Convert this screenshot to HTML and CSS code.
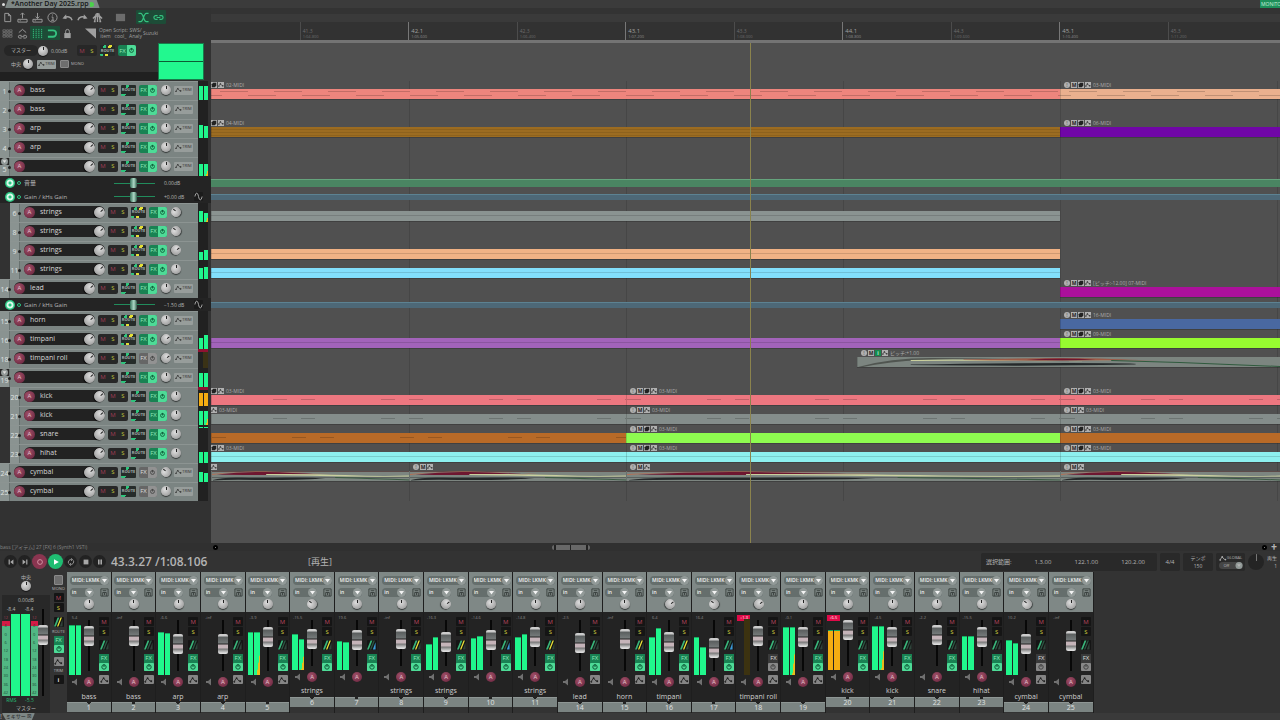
FILE: index.html
```html
<!DOCTYPE html>
<html lang="ja">
<head>
    <meta charset="UTF-8">
    <meta name="viewport" content="width=device-width, initial-scale=1.0">
    <title>Another Day 2025.rpp</title>
    <link rel="stylesheet" href="styles.css">
</head>

<body>

    <!-- icons -->
    <svg class="sprite" width="0" height="0">
        <symbol id="i-file" viewBox="0 0 12 12"><path d="M3 1.5h4l2.500 2.500v6.500H3zM7 1.500V4h2.500"/></symbol>
        <symbol id="i-open" viewBox="0 0 12 12"><path d="M1 8h10v3H1zM6 7V1M4 3l2-2 2 2M3 9.500h1"/></symbol>
        <symbol id="i-save" viewBox="0 0 12 12"><path d="M1 8h10v3H1zM6 1v6M4 5l2 2 2-2M3 9.500h1"/></symbol>
        <symbol id="i-info" viewBox="0 0 12 12"><circle cx="6" cy="6" r="5"/><path d="M5 5.500h1.500V9M4.500 9h3.500M6 2.800v1"/></symbol>
        <symbol id="i-undo" viewBox="0 0 12 12"><path stroke-width="1.500" d="M11 9C10 5 6 4.500 2.500 6"/><path class="fill" d="M0.500 7l4-4.500 0.500 5z"/></symbol>
        <symbol id="i-redo" viewBox="0 0 12 12"><path stroke-width="1.500" d="M1 9C2 5 6 4.500 9.500 6"/><path class="fill" d="M11.500 7l-4-4.500-0.500 5z"/></symbol>
        <symbol id="i-metro" viewBox="0 0 12 12"><path stroke-width="1.500" d="M4.500 2h3L9 10M4.500 2L3 10M1 7l2.500-2.500h5L11 7M6 1v10M2 10.500h2M8 10.500h2"/></symbol>
        <symbol id="i-box" viewBox="0 0 12 12"><path class="fill" d="M1 2h10v8H1z"/></symbol>
        <symbol id="i-cross" viewBox="0 0 12 12"><path stroke-width="1.300" d="M0.500 1.500h2.500c3 0 3 9 6 9h2.500M0.500 10.500h2.500c3 0 3-9 6-9h2.500"/></symbol>
        <symbol id="i-link" viewBox="0 0 12 12"><path stroke-width="1.300" d="M5 4H3a2 2 0 0 0 0 4h2M7 4h2a2 2 0 0 1 0 4H7M4 6h4"/></symbol>
        <symbol id="i-grid" viewBox="0 0 12 12"><path d="M1 2h3v2H1zM5 2h2v2H5zM8 2h3v2H8zM1 5h3v2H1zM5 5h2v2H5zM8 5h3v2H8zM1 8h3v2H1zM5 8h2v2H5zM8 8h3v2H8z"/></symbol>
        <symbol id="i-group" viewBox="0 0 12 12"><path d="M2 5l4-3.500L10 5M5 8H3a1.500 1.500 0 0 0 0 3h2M7 8h2a1.500 1.500 0 0 1 0 3H7M4 9.500h4"/></symbol>
        <symbol id="i-lines" viewBox="0 0 12 12"><path stroke-dasharray="1.500 0.700" d="M1.500 1v10M4.500 1v10M7.500 1v10M10.500 1v10"/></symbol>
        <symbol id="i-magnet" viewBox="0 0 12 12"><path stroke-width="2" d="M1 2.500h5.500a3.500 3.500 0 0 1 0 7H1"/></symbol>
        <symbol id="i-lock" viewBox="0 0 12 12"><path d="M4 6V3.500a2 2 0 0 1 4 0V6"/><path class="fill" d="M2.500 5.500h7v5.500h-7z"/></symbol>
        <symbol id="i-corner" viewBox="0 0 12 12"><path class="fill" d="M0 0.500h12v11z"/></symbol>
        <symbol id="i-env" viewBox="0 0 10 8"><path d="M1 6l3-4 2.500 3H9"/><circle class="fill" cx="1.500" cy="6" r="1"/><circle class="fill" cx="4" cy="2" r="1"/><circle class="fill" cx="8" cy="5.500" r="1"/></symbol>
        <symbol id="i-route" viewBox="0 0 10 10"><path class="r1" d="M0 10L4 0h2L2 10z"/><path class="r2" d="M3.300 10l4-10h1.500l-4 10z"/><path class="r3" d="M6.500 10l3-8v8z"/></symbol>
        <symbol id="i-power" viewBox="0 0 8 8"><circle cx="4" cy="4" r="2.200"/><path d="M4 1v3"/></symbol>
        <symbol id="i-wave" viewBox="0 0 10 10"><path d="M1 5c1-5 3-5 4 0s3 5 4 0"/></symbol>
        <symbol id="i-speaker" viewBox="0 0 8 8"><path class="fill" d="M1 3h2l3-2.500v7L3 5H1z"/></symbol>
        <symbol id="i-disk" viewBox="0 0 10 10"><path d="M1 1h8v8H1zM3 9V5h4v4M3 3h4M5 5v3"/></symbol>
        <symbol id="i-prev" viewBox="0 0 10 10"><path class="fill" d="M2 2h1.500v6H2zM8 2v6L4 5z"/></symbol>
        <symbol id="i-next" viewBox="0 0 10 10"><path class="fill" d="M6.500 2H8v6H6.500zM2 2v6l4-3z"/></symbol>
        <symbol id="i-rec" viewBox="0 0 10 10"><circle cx="5" cy="5" r="3"/></symbol>
        <symbol id="i-play" viewBox="0 0 10 10"><path class="fill" d="M2.500 1.500v7l6-3.500z"/></symbol>
        <symbol id="i-loop" viewBox="0 0 10 10"><path d="M2 7A3.500 3.500 0 0 1 6 2M8 3a3.500 3.500 0 0 1-4 5M5 0.500L7 2 5 3.500M5 6.500L3 8l2 1.500"/></symbol>
        <symbol id="i-stop" viewBox="0 0 10 10"><path class="fill" d="M2 2h6v6H2z"/></symbol>
        <symbol id="i-pause" viewBox="0 0 10 10"><path class="fill" d="M2.500 2h2v6h-2zM5.500 2h2v6h-2z"/></symbol>
        <symbol id="i-cube" viewBox="0 0 8 8"><path class="fill" d="M1 3l2-2h4v4L5 7H1z"/></symbol>
        <symbol id="i-drop" viewBox="0 0 9 9"><circle class="drop" cx="4.500" cy="4.500" r="4.500"/><path class="fill" d="M2 3h5L4.500 6.500z"/></symbol>
    </svg>

    <header class="tabs">
        <span class="tabs__dot"></span>
        <button class="tabs__tab">*Another Day 2025.rpp<i></i></button>
        <span class="tabs__monitor">MONITO</span>
    </header>

    <main class="arrange">
        <section class="panel">
            <div class="toolbar">
                <div class="toolbar__row">
                    <button class="tool"><svg><use href="#i-file"/></svg></button>
                    <button class="tool"><svg><use href="#i-open"/></svg></button>
                    <button class="tool"><svg><use href="#i-save"/></svg></button>
                    <button class="tool"><svg><use href="#i-info"/></svg></button>
                    <button class="tool"><svg><use href="#i-undo"/></svg></button>
                    <button class="tool"><svg><use href="#i-redo"/></svg></button>
                    <button class="tool"><svg><use href="#i-metro"/></svg></button>
                    <button class="tool tool--apart tool--dim"><svg><use href="#i-box"/></svg></button>
                    <button class="tool tool--apart _on"><svg><use href="#i-cross"/></svg></button>
                    <button class="tool _on"><svg><use href="#i-link"/></svg></button>
                </div>
                <div class="toolbar__row">
                    <button class="tool tool--dim"><svg><use href="#i-grid"/></svg></button>
                    <button class="tool"><svg><use href="#i-group"/></svg></button>
                    <button class="tool _on"><svg><use href="#i-lines"/></svg></button>
                    <button class="tool _on"><svg><use href="#i-magnet"/></svg></button>
                    <button class="tool"><svg><use href="#i-lock"/></svg></button>
                    <button class="tool tool--apart"><svg><use href="#i-corner"/></svg></button>
                    <button class="tool tool--text">Open item</button>
                    <button class="tool tool--text">Script: cool_</button>
                    <button class="tool tool--text">SWS/ Analy</button>
                    <button class="tool tool--text">Suzuki</button>
                </div>
            </div>

            <div class="master">
                <div class="master__controls">
                    <div class="master__row">
                        <span class="master__name">マスター</span>
                        <span class="knob"></span>
                        <span class="master__db">0.00dB</span>
                        <span class="ms"><button class="ms__m">M</button><button class="ms__s">S</button></span>
                        <button class="route route--busy">ROUTE</button>
                        <span class="fx"><button>FX</button><button class="fx__on"><svg><use href="#i-power"/></svg></button></span>
                    </div>
                    <div class="master__row master__row--second">
                        <span class="master__pan">中央</span>
                        <span class="knob"></span>
                        <button class="trim"><svg><use href="#i-env"/></svg>TRIM</button>
                        <button class="mono"></button>
                        <span class="master__mono">MONO</span>
                    </div>
                    <div class="master__foot"></div>
                </div>
                <div class="master__scope"></div>
            </div>

            <div class="tracks" id="tracks"></div>
        </section>

        <section class="timeline">
            <div class="ruler" id="ruler"></div>
            <div class="timeline__master"></div>
            <div class="lanes" id="lanes"></div>
            <div class="playhead"></div>
        </section>
    </main>

    <div class="status">
        <span class="status__text">bass [アイテム] 27 [FX] 6 (Synth1 VSTi)</span>
        <div class="scroll">
            <span class="scroll__dot"></span>
            <span class="scroll__thumb"></span>
            <span class="scroll__dot scroll__dot--end"></span>
            <span class="scroll__plus">✚</span>
        </div>
    </div>

    <section class="transport">
        <div class="transport__buttons">
            <button class="round"><svg><use href="#i-prev"/></svg></button>
            <button class="round"><svg><use href="#i-next"/></svg></button>
            <button class="round round--rec"><svg><use href="#i-rec"/></svg></button>
            <button class="round round--play"><svg><use href="#i-play"/></svg></button>
            <button class="round"><svg><use href="#i-loop"/></svg></button>
            <button class="round round--apart"><svg><use href="#i-stop"/></svg></button>
            <button class="round"><svg><use href="#i-pause"/></svg></button>
        </div>
        <span class="transport__time">43.3.27 /1:08.106</span>
        <span class="transport__state">[再生]</span>
        <div class="transport__info">
            <div class="info info--range"><span>選択範囲:</span><span>1.3.00</span><span>122.1.00</span><span>120.2.00</span></div>
            <div class="info info--sig">4/4</div>
            <div class="info info--tempo"><span>テンポ</span><span>150</span></div>
            <div class="info info--global">
                <span><svg><use href="#i-env"/></svg>GLOBAL</span>
                <button>Off<svg><use href="#i-drop"/></svg></button>
            </div>
            <span class="rate"></span>
            <div class="rate-text"><span>再生</span><span>1</span></div>
        </div>
    </section>

    <section class="mixer">
        <div class="mmaster">
            <div class="mmaster__main">
                <span class="mmaster__pan">中央</span>
                <span class="knob"></span>
                <div class="mmaster__box">
                    <span class="mmaster__db">0.00dB</span>
                    <div class="mmaster__level">
                        <div class="mmaster__meter">
                            <div class="mmaster__peaks"><span>-8.4</span><span>-8.4</span></div>
                            <div class="mmaster__bars">
                                <div class="scale"><span>12</span><span>6</span><span>0</span><span>6</span><span>12</span><span>18</span><span>24</span><span>30</span><span>36</span><span>42</span></div>
                                <i></i><i></i>
                                <div class="scale"><span>12</span><span>6</span><span>0</span><span>6</span><span>12</span><span>18</span><span>24</span><span>30</span><span>36</span><span>42</span></div>
                            </div>
                            <div class="mmaster__rms"><span>RMS</span><span>-5.5</span></div>
                        </div>
                        <input class="fader fader--master" type="range" min="0" max="67" value="51" aria-label="master volume">
                    </div>
                    <span class="mmaster__name">マスター</span>
                </div>
            </div>
            <div class="mmaster__side">
                <button class="mono"></button>
                <small>MONO</small>
                <button class="sq sq--m">M</button>
                <button class="sq sq--s">S</button>
                <button class="sq sq--route _yellow"><svg><use href="#i-route"/></svg></button>
                <small>ROUTE</small>
                <span class="vfx"><button>FX</button><button class="vfx__on"><svg><use href="#i-power"/></svg></button></span>
                <button class="sq sq--env"><svg><use href="#i-env"/></svg></button>
                <small>TRIM</small>
                <button class="sq sq--i">i</button>
            </div>
        </div>
        <div class="strips" id="strips"></div>
    </section>

    <footer class="bottom">
        <span>!</span>
        <button class="bottom__tab">ミキサー ☒</button>
    </footer>

    <script src="script.js"></script>
</body>

</html>
```
FILE: styles.css
```css
* {
    box-sizing: border-box;
}

body {
    margin: 0;
    min-height: 100vh;
    background: #333;
    color: #b4b4b4;
    font: 7px/8px "Open Sans", "Noto Sans CJK JP", sans-serif;
    overflow-x: hidden;
}

button,
select {
    display: block;
    margin: 0;
    padding: 0;
    border: 0;
    border-radius: 1px;
    background: none;
    color: inherit;
    font: inherit;
    text-align: center;
    appearance: none;
}

svg {
    display: block;
    fill: none;
    stroke: currentColor;
}

svg .fill,
.fill {
    fill: currentColor;
    stroke: none;
}

.sprite {
    position: absolute;
}

/* ========== TABS =========== */
.tabs {
    display: flex;
    align-items: center;
    height: 8px;
    background: #3b3b3b;
}

.tabs__dot {
    width: 3px;
    height: 3px;
    margin-left: 2px;
    border-radius: 50%;
    background: #ddd;
}

.tabs__tab {
    display: flex;
    align-items: center;
    height: 8px;
    padding: 0 6px 0 6px;
    background: #7e8785;
    color: #151515;
    font-weight: 600;
    font-size: 7px;
    white-space: nowrap;
    clip-path: polygon(3px 0, calc(100% - 3px) 0, 100% 100%, 0 100%);
}

.tabs__tab i {
    width: 4px;
    height: 5px;
    margin-left: 1px;
    border-radius: 1px 3px 3px 1px;
    background: #4bd04c;
}

.tabs__monitor {
    width: 20px;
    margin-left: auto;
    padding-left: 1px;
    overflow: hidden;
    background: #1d8f5a;
    color: #c8f0dc;
    font-size: 5px;
}

/* ========== LEFT PANEL =========== */
.arrange {
    display: flex;
    height: 535px;
}

.panel {
    flex: 0 0 211px;
    background: #323232;
}

.toolbar {
    height: 34px;
    padding-top: 2px;
}

.toolbar__row {
    display: flex;
    height: 16px;
}

.tool {
    display: flex;
    align-items: center;
    justify-content: center;
    width: 15px;
    height: 14px;
    color: #a0a0a0;
}

.tool svg {
    width: 11px;
    height: 11px;
}

.tool--apart {
    margin-left: 8px;
}

.tool--dim {
    color: #6c6c6c;
}

.tool._on {
    background: #1d4c37;
    color: #35c380;
}

.tool--text {
    font-size: 5px;
    line-height: 6px;
}

.master {
    display: flex;
    height: 39px;
}

.master__controls {
    width: 158px;
}

.master__row {
    display: flex;
    align-items: center;
    height: 17px;
    padding-left: 4px;
}

.master__row--second {
    height: 10px;
    padding-left: 11px;
    font-size: 6px;
}

.master__row--second .knob {
    margin: 0 4px 0 0;
}

.master__pan {
    flex: none;
    width: 12px;
    font-size: 5px;
}

.master__name {
    flex: none;
    width: 34px;
    height: 11px;
    padding: 1px 0 0 7px;
    border-radius: 6px;
    background: #262626;
    font-size: 5px;
    line-height: 9px;
    white-space: nowrap;
}

.master__db {
    width: 26px;
    margin-left: 3px;
    font-size: 5px;
}

.master__mono {
    margin-left: 2px;
    font-size: 4px;
}

.master__foot {
    height: 9px;
    margin-top: 3px;
    background: #202020;
}

.master__scope {
    width: 46px;
    height: 37px;
    margin-top: 1px;
    border: 1px solid #187c4b;
    background: linear-gradient(#22f88f 17px, #0c5c35 17px, #0c5c35 18px, #22f88f 18px);
}

/* ========== SHARED CONTROLS =========== */
.knob {
    flex: none;
    width: 10px;
    height: 10px;
    border-radius: 50%;
    background: linear-gradient(#222, #222) 50% 1px / 1px 3px no-repeat, radial-gradient(circle at 40% 35%, #dedede, #8d8d8d);
    box-shadow: 0 1px 1px rgba(0, 0, 0, .6);
}

.knob._left {
    transform: rotate(-50deg);
}

.knob._right {
    transform: rotate(50deg);
}

.ms {
    display: flex;
    flex: none;
    width: 20px;
    height: 11px;
    border-radius: 2px;
    background: #272727;
}

.ms button {
    flex: 1;
    font-size: 6px;
}

.ms__m {
    color: #a03c54;
}

.ms__s {
    color: #c0c63e;
}

.route {
    flex: none;
    width: 15px;
    height: 11px;
    margin-left: 3px;
    background: linear-gradient(110deg, transparent 35%, #2fc47d 35%, #2fc47d 50%, transparent 50%) 0 0 / 15px 3px no-repeat, linear-gradient(110deg, #2fc47d 30%, transparent 30%) 0 9px / 15px 2px no-repeat, #262c2a;
    color: #a5b1ad;
    font-size: 4px;
    font-weight: 700;
}

.route--busy {
    background: linear-gradient(110deg, transparent 25%, #2fc47d 25%, #2fc47d 40%, #333 40%, #333 55%, #e5df35 55%, #e5df35 75%, transparent 75%) 0 0 / 15px 3px no-repeat, linear-gradient(110deg, #2fc47d 20%, transparent 20%, transparent 35%, #e5df35 35%, #e5df35 55%, transparent 55%) 0 9px / 15px 2px no-repeat, #262c2a;
}

.fx {
    display: flex;
    flex: none;
    width: 18px;
    height: 11px;
    margin-left: 3px;
    border-radius: 2px;
    overflow: hidden;
    background: #198253;
    color: #8fe6bb;
    font-size: 6px;
}

.fx button {
    flex: 1;
    border-radius: 0;
}

.fx__on {
    background: #4edb97;
    color: #0e5c38;
}

.fx__on svg {
    width: 7px;
    height: 7px;
    margin: 0 auto;
}

.fx._off {
    background: #666;
    color: #ddd;
}

.fx._off .fx__on {
    background: #929292;
    color: #444;
}

.trim {
    display: flex;
    align-items: center;
    justify-content: center;
    flex: none;
    width: 19px;
    height: 9px;
    background: #979d9b;
    color: #333;
    font-size: 4px;
}

.trim svg {
    width: 7px;
    height: 6px;
}

.mono {
    width: 9px;
    height: 8px;
    margin-left: 4px;
    border: 1px solid #8a8a8a;
    background: #6e6e6e;
}

.arm {
    flex: none;
    width: 10px;
    height: 10px;
    border-radius: 50%;
    background: radial-gradient(circle at 40% 35%, #a05068, #64203a);
    color: #e2c2cb;
    font-size: 6px;
    line-height: 10px;
}

/* ========== TRACKS =========== */
.track {
    display: flex;
    height: 19px;
}

.track__body {
    display: flex;
    align-items: center;
    width: 198px;
    padding-bottom: 2px;
    border-top: 1px solid #8c9492;
    background: #7b8482;
}

.track--child .track__body {
    width: 188px;
    margin-left: 10px;
}

.track__num {
    position: relative;
    align-self: flex-start;
    width: 10px;
    height: 18px;
    margin-right: 4px;
    padding-top: 5px;
    border-right: 1px solid #68716f;
    background: #8a9391;
    color: #e0e3e2;
    line-height: 9px;
    text-align: center;
}

.track__num::after {
    content: "";
    position: absolute;
    top: 8px;
    right: -2px;
    width: 3px;
    height: 3px;
    border-radius: 50%;
    background: #222;
}

.track--folder .track__num {
    padding-top: 0;
    background: linear-gradient(#262626 7px, #8a9391 7px);
}

.track__fold {
    width: 7px;
    height: 7px;
    margin: 0 auto;
    color: #ddd;
}

.track__fold svg {
    width: 7px;
    height: 7px;
}

.track__name {
    display: flex;
    align-items: center;
    width: 81px;
    height: 12px;
    margin-right: 3px;
    border-radius: 6px;
    background: #222;
    color: #d6d6d6;
}

.track__name span:not(.knob) {
    flex: 1;
    padding-left: 5px;
}

.track__name .arm,
.track__name .knob {
    width: 11px;
    height: 11px;
}

.track__body > .knob {
    margin: 0 3px 0 4px;
}

.track__meter {
    display: flex;
    align-items: flex-end;
    gap: 1px;
    width: 10px;
    padding-left: 1px;
    background: #212121;
}

.track__meter i,
.strip__meter i {
    flex: 1;
    background: #20f78c;
}

.track__meter ._hot,
.strip__meter ._hot {
    background: #f4ad12;
}

.track__meter ._mix,
.strip__meter ._mix {
    background: linear-gradient(to bottom right, #20f78c 72%, #e8ba1c 74%);
}

.track__meter--clip {
    border-top: 3px solid #8f1232;
}

.track__meter--dim {
    background: linear-gradient(90deg, #212121 50%, #3a3216 50%);
}

.track__meter--top {
    align-items: flex-start;
    padding-top: 2px;
}

.envelope {
    display: flex;
    align-items: center;
    height: 13px;
    padding-left: 5px;
    background: #242424;
    font-size: 6px;
}

.envelope--volume {
    height: 14px;
}

.envelope__on {
    width: 10px;
    height: 10px;
    border-radius: 50%;
    background: radial-gradient(#2bc683 1px, #d8fbea 2px, #d8fbea 3px, #2bc683 4px);
}

.envelope__arm {
    width: 4px;
    height: 4px;
    margin: 0 3px 0 2px;
    border: 1px solid #2bc683;
    border-radius: 50%;
}

.envelope__name {
    width: 84px;
    white-space: nowrap;
}

.envelope__slider {
    width: 48px;
    height: 10px;
    margin: 0 6px 0 2px;
    appearance: none;
    background: linear-gradient(#218c5c, #218c5c) 50% 50% / 41px 1px no-repeat;
}

.envelope__slider::-webkit-slider-thumb {
    width: 7px;
    height: 10px;
    border-radius: 2px;
    background: linear-gradient(90deg, #357058, #aed9c7 55%, #305b49);
    appearance: none;
}

.envelope__value {
    width: 30px;
    font-size: 5px;
}

.envelope__wave {
    width: 9px;
    height: 9px;
    background: #1b1b1b;
}

.envelope__wave svg {
    width: 9px;
    height: 9px;
}

/* ========== TIMELINE =========== */
.timeline {
    position: relative;
    flex: 1;
    min-width: 0;
    background: #505050;
    overflow: hidden;
}

.ruler {
    display: flex;
    height: 35px;
    padding-top: 14px;
    border-bottom: 3px solid #747474;
    background: linear-gradient(#333 6px, #3a3a3a 6px, #3a3a3a 14px, #323232 14px);
    overflow: hidden;
}

.ruler__mark {
    flex: 0 0 10.15%;
    height: 18px;
    padding: 6px 0 0 2px;
    border-left: 1px solid #4c4c4c;
    color: #6c6c6c;
    font-size: 4px;
    line-height: 6px;
}

.ruler__mark:first-child {
    margin-left: 8.3%;
}

.ruler__mark--bar {
    border-color: #777;
    color: #8a8a8a;
}

.ruler__mark b {
    display: block;
    font-weight: 400;
    font-size: 5px;
}

.ruler__mark--bar b {
    color: #a0a0a0;
    font-size: 6px;
}

.timeline__master {
    height: 38px;
}

.lanes {
    background: linear-gradient(90deg, #464646 1px, transparent 1px) 198px 0 / 20.3% 100%;
}

.lane {
    display: flex;
    height: 19px;
}

.lane--env {
    height: 13px;
    padding: 4px 0 3px;
}

.lane--volume {
    height: 14px;
    padding: 3px 0;
}

.lane--env div {
    flex: 1;
    border-top: 1px solid #5c8292;
    background: #4d6877;
}

.lane--volume div {
    border-color: #65a47d;
    background: #4a8562;
}

.clip {
    flex: none;
    min-width: 0;
}

.clip__label {
    display: flex;
    align-items: center;
    gap: 1px;
    height: 8px;
    padding-left: 4px;
    color: #ababab;
    font-size: 5px;
    white-space: nowrap;
    overflow: hidden;
}

.clip__label--cut {
    padding-left: 0;
}

.clip__icon {
    width: 6px;
    height: 6px;
    background: #b0b0b0;
    color: #222;
    font-size: 5px;
    font-style: normal;
    font-weight: 700;
    line-height: 6px;
    text-align: center;
}

.clip__icon svg {
    width: 6px;
    height: 6px;
}

.clip__icon--bang {
    border-radius: 50%;
    color: #777;
}

.clip__icon--lock {
    background: #178a4e;
    color: #b9f5d6;
}

.clip__label span {
    margin-left: 1px;
}

.clip__body {
    height: 10px;
    border-left: 1px solid rgba(0, 0, 0, .15);
    background-color: var(--color);
    box-shadow: 0 1px 0 rgba(0, 0, 0, .2);
}

.clip__body svg {
    width: 100%;
    height: 10px;
    stroke: none;
}

.clip__body--line {
    background-image: linear-gradient(transparent 4px, rgba(0, 0, 0, .14) 4px, rgba(0, 0, 0, .14) 5px, transparent 5px);
}

.clip__body--dense {
    background-image: repeating-linear-gradient(rgba(0, 0, 0, .03) 0 2px, rgba(0, 0, 0, .12) 2px 3px);
}

.clip__body--notes {
    background-image: linear-gradient(90deg, rgba(0, 0, 0, .18) 28px, transparent 28px), linear-gradient(90deg, transparent 26px, rgba(0, 0, 0, .18) 26px);
    background-position: 36px 6px, 36px 2px;
    background-size: 54px 1px;
    background-repeat: repeat-x;
}

.clip__body--hits {
    background-image: linear-gradient(90deg, rgba(0, 0, 0, .18) 14px, transparent 14px, transparent 80px, rgba(0, 0, 0, .18) 80px, rgba(0, 0, 0, .18) 94px, transparent 94px);
    background-position: 0 4px;
    background-size: 108px 1px;
    background-repeat: repeat-x;
}

.clip__label--cut + .clip__body--hits {
    background-position: 89px 4px;
}

.playhead {
    position: absolute;
    top: 35px;
    bottom: 0;
    left: 50.4%;
    width: 1px;
    background: #8b834d;
}

/* ========== STATUS AND TRANSPORT =========== */
.status {
    display: flex;
    align-items: center;
    height: 8px;
    background: #303030;
}

.status__text {
    flex: 0 0 211px;
    color: #858585;
    font-size: 5px;
}

.scroll {
    display: flex;
    align-items: center;
    flex: 1;
    height: 8px;
    padding: 0 3px 0 2px;
}

.scroll__dot {
    width: 5px;
    height: 5px;
    border: 2px solid #000;
    border-radius: 50%;
    background: #aaa;
}

.scroll__thumb {
    width: 38px;
    height: 5px;
    margin-left: 31.4%;
    border-radius: 3px;
    background: linear-gradient(90deg, #686868 2px, #222 2px, #222 4px, transparent 4px, transparent 18px, #222 18px, #222 19px, transparent 19px, transparent 34px, #222 34px, #222 36px, transparent 36px), #686868;
}

.scroll__dot--end {
    margin-left: auto;
}

.scroll__plus {
    margin-left: 4px;
    font-size: 6px;
}

.transport {
    display: flex;
    align-items: center;
    height: 21px;
}

.transport__buttons {
    display: flex;
    align-items: center;
    gap: 1px;
    width: 111px;
    padding-left: 4px;
}

.round {
    display: flex;
    align-items: center;
    justify-content: center;
    width: 13px;
    height: 13px;
    border-radius: 50%;
    background: #222;
    color: #a8a8a8;
}

.round svg {
    width: 8px;
    height: 8px;
}

.round--rec {
    width: 15px;
    height: 15px;
    background: #8a3550;
    color: #e0a5b3;
}

.round--play {
    width: 15px;
    height: 15px;
    background: #1fbd72;
    color: #fff;
}

.round--apart {
    margin-left: 1px;
}

.transport__time {
    width: 197px;
    font-size: 12px;
    font-weight: 600;
    line-height: 16px;
}

.transport__state {
    font-size: 9px;
    line-height: 14px;
}

.transport__info {
    display: flex;
    align-items: center;
    gap: 3px;
    flex: none;
    width: 299px;
    height: 18px;
    margin-left: auto;
}

.info {
    display: flex;
    flex: none;
    flex-direction: column;
    align-items: center;
    justify-content: center;
    height: 18px;
    border-radius: 2px;
    background: #292929;
    font-size: 6px;
}

.info--range {
    flex-direction: row;
    justify-content: space-between;
    width: 176px;
    padding: 0 12px 0 5px;
}

.info--sig {
    width: 20px;
}

.info--tempo {
    width: 30px;
    font-size: 5px;
}

.info--global {
    width: 29px;
    font-size: 4px;
}

.info--global span {
    display: flex;
    align-items: center;
}

.info--global svg {
    width: 8px;
    height: 7px;
}

.info--global button {
    display: flex;
    justify-content: space-between;
    width: 24px;
    height: 7px;
    padding: 0 0 0 5px;
    border-radius: 4px;
    background: #454545;
    line-height: 7px;
}

.rate {
    flex: none;
    width: 16px;
    height: 16px;
    border-radius: 50%;
    background: linear-gradient(#777, #777) 50% 0 / 1px 7px no-repeat, #242424;
}

.rate-text {
    display: flex;
    flex-direction: column;
    font-size: 5px;
    white-space: nowrap;
}

.rate-text span + span {
    text-align: right;
}

/* ========== MIXER =========== */
.mixer {
    display: flex;
    height: 141px;
}

.mmaster {
    display: flex;
    flex: 0 0 67px;
    background: #333;
}

.mmaster__main {
    display: flex;
    flex-direction: column;
    align-items: center;
    width: 52px;
    padding-top: 1px;
}

.mmaster__pan {
    font-size: 5px;
}

.mmaster__box {
    display: flex;
    flex-direction: column;
    align-items: center;
    width: 48px;
    height: 118px;
    margin-top: 4px;
    background: #282828;
    font-size: 5px;
}

.mmaster__db {
    line-height: 10px;
}

.mmaster__level {
    display: flex;
    width: 48px;
}

.mmaster__meter {
    width: 36px;
}

.mmaster__peaks,
.mmaster__rms {
    display: flex;
    justify-content: space-around;
    line-height: 9px;
}

.mmaster__rms {
    color: #25bc74;
    line-height: 8px;
}

.mmaster__bars {
    display: flex;
    gap: 1px;
    height: 82px;
}

.mmaster__bars i {
    flex: 0 0 9px;
    background: #20f78c;
}

.scale {
    display: flex;
    flex-direction: column;
    justify-content: space-between;
    flex: 1;
    background: linear-gradient(transparent 7px, #d51b45 7px, #d51b45 12px, #51b783 12px);
    color: #1c4d36;
    font-size: 4px;
    line-height: 7px;
    text-align: center;
}

.scale span:first-child {
    color: #a03c54;
}

.mmaster__name {
    font-size: 5px;
}

.mmaster__side {
    display: flex;
    flex-direction: column;
    align-items: center;
    width: 13px;
    padding-top: 3px;
}

.mmaster__side .mono {
    height: 10px;
    margin: 0;
}

.mmaster__side small {
    font-size: 4px;
}

.mmaster__side .sq {
    margin-bottom: 1px;
}

.strips {
    display: grid;
    grid-template-columns: repeat(23, 1fr);
    width: 80.2%;
}

.strip {
    min-width: 0;
    border-right: 1px solid #1e1e1e;
}

.strip__io {
    display: flex;
    flex-direction: column;
    align-items: center;
    height: 40px;
    padding: 4px 2px 0 3px;
    background: #7f8886;
}

.pick {
    position: relative;
    width: 39px;
}

.pick select {
    width: 100%;
    height: 9px;
    padding-left: 2px;
    border-radius: 4px;
    background: #656e6c;
    color: #f2f3f3;
    font-size: 5px;
    font-weight: 600;
    line-height: 9px;
    text-align: left;
}

/* round arrow over the drop-down's end */
.pick svg {
    position: absolute;
    top: 0;
    right: 0;
    width: 9px;
    height: 9px;
    color: #f4f4f4;
    pointer-events: none;
}

.drop {
    fill: #929a98;
    stroke: none;
}

.track__fold .drop,
.info--global .drop {
    fill: #777;
}

.strip__in {
    display: flex;
    justify-content: space-between;
    width: 39px;
    margin: 3px 0 2px;
}

.strip__in .pick {
    width: 24px;
}

.strip__disk {
    width: 9px;
    height: 9px;
    color: #383e3c;
}

.strip__disk svg {
    width: 9px;
    height: 9px;
}

.strip__main {
    height: 90px;
    padding-top: 3px;
    background: #232323;
}

.strip--child .strip__main {
    height: 85px;
}

.strip__value {
    width: 13px;
    height: 6px;
    margin-left: 1px;
    color: #8a8a8a;
    font-size: 4px;
    line-height: 6px;
    text-align: center;
}

.strip__value--clip {
    background: #e00a48;
    color: #fff;
}

.strip__row {
    display: grid;
    grid-template-columns: 13px 11px 11px;
    column-gap: 3px;
    padding-left: 2px;
    height: 72px;
}

.strip__left {
    grid-column: 1 / 3;
    width: 27px;
    margin-top: -2px;
}

.strip__levels {
    display: flex;
    gap: 3px;
}

.strip__meter {
    display: flex;
    align-items: flex-end;
    gap: 1px;
    width: 12px;
    height: 56px;
}

.strip--child .strip__meter {
    height: 51px;
}

.strip__meter i {
    border-top: 1px solid #1aaa62;
}

.strip__meter--dim {
    background: linear-gradient(90deg, transparent 6px, #3c3210 6px);
}

.fader {
    width: 10px;
    height: 51px;
    margin: 1px 0 0;
    writing-mode: vertical-lr;
    direction: rtl;
    appearance: none;
    background: linear-gradient(#080808, #080808) 50% 50% / 2px 100% no-repeat;
}

.strip--child .fader {
    height: 46px;
}

.fader--master {
    height: 87px;
    margin: 4px 0 0;
}

.fader::-webkit-slider-thumb {
    width: 10px;
    height: 20px;
    border-radius: 2px;
    background: linear-gradient(#ccc 2px, #5a5e5e 3px, #747979 9px, #222 10px, #c5b4b9 11px, #c5b4b9 14px, #777 15px, #ddd 19px);
    appearance: none;
}

.strip__arm {
    display: flex;
    align-items: center;
    gap: 5px;
    padding: 2px 0 0 2px;
}

.strip__arm svg {
    width: 8px;
    height: 8px;
    color: #707070;
}

.strip__buttons {
    margin-top: -4px;
}

.sq {
    display: flex;
    align-items: center;
    justify-content: center;
    width: 10px;
    height: 9px;
    margin-bottom: 1px;
    background: #151515;
    font-size: 6px;
}

.sq--m {
    color: #b8465f;
}

.sq--s {
    color: #d4d340;
}

.sq--route {
    height: 10px;
    margin: 4px 0;
}

.sq--route svg {
    width: 9px;
    height: 10px;
    stroke: none;
}

.r1 {
    fill: #39b57a;
}

.r2 {
    fill: var(--second, #2c5a45);
}

.r3 {
    fill: var(--third, #30443b);
}

._yellow {
    --second: #f0e838;
}

._blue {
    --third: #3a9ad8;
}

.vfx {
    display: block;
    width: 10px;
    height: 17px;
    margin-bottom: 4px;
    background: #198253;
    color: #8fe6bb;
    font-size: 6px;
}

.vfx button {
    width: 10px;
    height: 9px;
    line-height: 9px;
}

.vfx .vfx__on {
    height: 8px;
    background: #4edb97;
    color: #0e5c38;
}

.vfx svg {
    width: 8px;
    height: 8px;
    margin: 0 auto;
}

.vfx._off {
    background: #3a3a3a;
    color: #ddd;
}

.vfx._off .vfx__on {
    background: #888;
    color: #444;
}

.sq--env {
    background: #858585;
    color: #222;
}

.sq--env svg {
    width: 9px;
    height: 8px;
}

.sq--i {
    color: #ddd;
    font-weight: 700;
}

.strip__name {
    height: 8px;
    color: #d0d0d0;
    text-align: center;
}

.strip--child .strip__row {
    height: 66px;
}

.strip__num {
    height: 10px;
    background: radial-gradient(circle at 50% 0, #232323 2px, transparent 2px), linear-gradient(#8e9694 1px, #7b8482 1px);
    color: #e0e3e2;
    line-height: 11px;
    text-align: center;
}

/* ========== BOTTOM TAB =========== */
.bottom {
    display: flex;
    height: 7px;
    background: #3a3a3a;
    overflow: hidden;
}

.bottom__tab {
    width: 33px;
    background: #7e8785;
    color: #1b1b1b;
    font-size: 5px;
    line-height: 7px;
    clip-path: polygon(0 0, 100% 0, 30px 100%, 4px 100%);
}
```
FILE: script.js
```js
// m - meter levels in the track list, clips - [start, end, color, label, pattern, icons]
const FROM = 211;
const SPAN = 1069;
const END = 1280;

const tracks = [
    { n: 1, name: 'bass', m: [14, 14], clips: [[211, 1060, '#ee857d', '02-MIDI', 'notes', 'cut2'], [1060, END, '#eab08e', '03-MIDI', 'notes', 'all']] },
    { n: 2, name: 'bass' },
    { n: 3, name: 'arp', m: [13, 12], clips: [[211, 1060, '#a17022', '04-MIDI', 'dense', 'cut2'], [1060, END, '#7006a7', '06-MIDI', '', 'all']] },
    { n: 4, name: 'arp' },
    { n: 5, name: '', folder: true, m: [12, 12], mix: true },
    { env: '音量', value: '0.00dB', volume: true },
    { env: 'Gain / kHs Gain', value: '+0.00 dB' },
    { n: 6, name: 'strings', child: true, busy: true, pan: '_left', m: [11, 9], mix: true, clips: [[211, 1060, '#8a9391', '', 'line']] },
    { n: 8, name: 'strings', child: true, busy: true, pan: '_left' },
    { n: 9, name: 'strings', child: true, busy: true, pan: '_right', m: [8, 10], clips: [[211, 1060, '#f1b285', '', 'line']] },
    { n: 11, name: 'strings', child: true, busy: true, m: [11, 12], clips: [[211, 1060, '#82dffc', '', 'line']] },
    { n: 14, name: 'lead', clips: [[1060, END, '#ac109b', '[ピッチ:-12.00] 07-MIDI', '', 'all']] },
    { env: 'Gain / kHs Gain', value: '−1.50 dB' },
    { n: 15, name: 'horn', busy: true, clips: [[1060, END, '#4968a1', '16-MIDI', '', 'all']] },
    { n: 16, name: 'timpani', busy: true, pan: '_right', m: [11, 14], clips: [[211, 1060, '#a263ba', '', 'line'], [1060, END, '#97fb30', '09-MIDI', '', 'all']] },
    { n: 18, name: 'timpani roll', off: true, pan: '_right', meter: 'track__meter--clip track__meter--dim', clips: [[857, END, '#7c8580', 'ピッチ:+1.00', 'wave', 'lock']] },
    { n: 19, name: '', folder: true, m: [14, 14] },
    { n: 20, name: 'kick', child: true, m: [13, 13], hot: true, meter: 'track__meter--clip', clips: [[211, 626, '#ed7780', '03-MIDI', 'hits', 'cut2'], [626, 1060, '#ed7780', '03-MIDI', 'hits', 'all'], [1060, END, '#ed7780', '03-MIDI', 'hits', 'all']] },
    { n: 21, name: 'kick', child: true, m: [14, 14], mix: true, clips: [[211, 626, '#848d8b', '03-MIDI', 'hits', 'cut1'], [626, 1060, '#848d8b', '03-MIDI', 'hits', 'three'], [1060, END, '#848d8b', '03-MIDI', 'hits', 'three']] },
    { n: 22, name: 'snare', child: true, m: [1, 1], meter: 'track__meter--top', clips: [[211, 626, '#b86a27', '', 'hits'], [626, 1060, '#8efb50', '03-MIDI', '', 'all'], [1060, END, '#b86a27', '03-MIDI', '', 'all']] },
    { n: 23, name: 'hihat', child: true, m: [11, 11], clips: [[211, 626, '#8df0ef', '03-MIDI', 'line', 'cut2'], [626, 1060, '#8df0ef', '03-MIDI', 'line', 'all'], [1060, END, '#8df0ef', '03-MIDI', 'line', 'all']] },
    { n: 24, name: 'cymbal', off: true, pan: '_left', m: [10, 9], clips: [[211, 409, '#7c8580', '', 'wave', 'cut1'], [409, 626, '#7c8580', '', 'wave', 'three'], [626, 1060, '#7c8580', '', 'wave', 'three'], [1060, END, '#7c8580', '', 'wave', 'three']] },
    { n: 25, name: 'cymbal', off: true },
];

// c - fader centre measured from the top of the slot
const strips = [
    { n: 1, name: 'bass', v: '5.4', m: [50, 50], c: 16 },
    { n: 2, name: 'bass', v: '-inf', c: 16 },
    { n: 3, name: 'arp', v: '-6.6', m: [43, 42], c: 24 },
    { n: 4, name: 'arp', v: '-inf', c: 24 },
    { n: 5, name: '', v: '-3.9', m: [43, 43], mix: true, c: 17 },
    { n: 6, name: 'strings', v: '-15.5', m: [36, 31], mix: true, c: 19, child: true, r: '_yellow', pan: '_left' },
    { n: 7, name: '', v: '19.6', m: [29, 28], c: 20, child: true, r: '_blue' },
    { n: 8, name: 'strings', v: '-inf', c: 19, child: true, r: '_yellow' },
    { n: 9, name: 'strings', v: '-16.3', m: [26, 33], c: 22, child: true, r: '_yellow', pan: '_right' },
    { n: 10, name: '', v: '-14.6', m: [32, 34], c: 20, child: true, r: '_blue' },
    { n: 11, name: 'strings', v: '-14.8', m: [33, 36], c: 17, child: true, r: '_yellow' },
    { n: 14, name: 'lead', v: '-2.5', c: 23 },
    { n: 15, name: 'horn', v: '-inf', c: 19, r: '_yellow' },
    { n: 16, name: 'timpani', v: '6.4', m: [38, 47], c: 22, r: '_yellow', pan: '_right' },
    { n: 17, name: '', v: '16.4', m: [38, 28], c: 28, r: '_blue', pan: '_left' },
    { n: 18, name: 'timpani roll', v: '+1.3', clip: true, dim: true, c: 16, off: true, pan: '_right' },
    { n: 19, name: '', v: '-0.1', m: [48, 48], mix: true, c: 17 },
    { n: 20, name: 'kick', v: '+6.5', clip: true, hot: true, m: [40, 40], c: 10, child: true },
    { n: 21, name: 'kick', v: '-4.5', m: [44, 44], mix: true, c: 17, child: true },
    { n: 22, name: 'snare', v: '-2.2', c: 15, child: true },
    { n: 23, name: 'hihat', v: '-15.5', m: [34, 34], c: 17, child: true },
    { n: 24, name: 'cymbal', v: '10.2', m: [35, 32], c: 24, off: true, pan: '_left' },
    { n: 25, name: 'cymbal', v: '-inf', c: 21, off: true },
];

const marks = [
    ['41.3', '1:04.800'], ['42.1', '1:05.600'], ['42.3', '1:06.400'], ['43.1', '1:07.200'], ['43.3', '1:08.000'],
    ['44.1', '1:08.800'], ['44.3', '1:09.600'], ['45.1', '1:10.400'], ['45.3', '1:11.200'],
];

const icon = id => `<svg><use href="#i-${id}"/></svg>`;

const bang = '<i class="clip__icon clip__icon--bang">!</i>';
const mute = '<i class="clip__icon">M</i>';
const cube = `<i class="clip__icon">${icon('cube')}</i>`;
const env = `<i class="clip__icon">${icon('env')}</i>`;
const lock = '<i class="clip__icon clip__icon--lock">i</i>';
const iconSets = {
    all: bang + mute + cube + env,
    three: bang + mute + env,
    lock: bang + mute + lock + env,
    cut2: cube + env,
    cut1: env,
};

const wave = `<svg viewBox="0 0 400 10" preserveAspectRatio="none">
    <path fill="#5d4a48" d="M0 0h400v1H0z"/>
    <path fill="#b56f55" d="M0 3Q60 0 110 0.500T260 3.500Q140 1 90 1T0 4z"/>
    <path fill="#6e1630" d="M10 3.500Q60 0.500 110 1T220 3.500Q140 4 90 4T10 3.500z"/>
    <path fill="#c9cf9d" d="M110 3Q200 2.500 270 4T400 4.500V5.500Q300 6 220 5T110 4z"/>
    <path fill="#25292a" d="M2 9Q20 6 60 6.500t90 0 80 1Q150 9.500 90 9T2 9.500z"/>
    <path fill="#3b4140" d="M0 6.500h400v0.500H0z"/>
    <path fill="#3c5b43" d="M250 6Q340 7 400 8.500V9.500Q330 8 250 7z"/>
</svg>`;
const swell = `<svg viewBox="0 0 400 10" preserveAspectRatio="none">
    <path fill="#505550" d="M0 10Q30 1 70 1T180 3Q90 1.500 60 3T5 10z"/>
    <path fill="#c9cf9d" d="M50 3Q100 2 150 3.500T250 3Q220 4.500 150 4T50 4z"/>
    <path fill="#9d5b47" d="M100 2.500Q190 0 240 2T300 3.500Q240 3 200 3.500T100 3z"/>
    <path fill="#6e1630" d="M160 2.500Q195 0.500 225 2.500Q195 4 160 2.500z"/>
    <path fill="#25292a" d="M50 7.500Q120 6 200 6t60 1.500Q180 9 120 8.500T50 8z"/>
    <path fill="#2f5a3d" d="M240 3Q320 5 400 9V10Q320 6 240 4z"/>
</svg>`;

function trackHtml(t) {
    if (t.env) {
        return `<div class="envelope ${t.volume ? 'envelope--volume' : ''}">
            <span class="envelope__on"></span><span class="envelope__arm"></span>
            <span class="envelope__name">${t.env}</span>
            <input class="envelope__slider" type="range" value="48" aria-label="${t.env}">
            <span class="envelope__value">${t.value}</span>
            ${t.volume ? '' : `<button class="envelope__wave">${icon('wave')}</button>`}
        </div>`;
    }
    const bars = (t.m || []).map((h, i) => {
        const cls = t.hot ? '_hot' : (t.mix && i ? '_mix' : '');
        return `<i class="${cls}" style="height:${h}px"></i>`;
    }).join('');
    return `<div class="track ${t.child ? 'track--child' : ''} ${t.folder ? 'track--folder' : ''}">
        <div class="track__body">
            <span class="track__num">${t.folder ? `<button class="track__fold">${icon('drop')}</button>` : ''}${t.n}</span>
            <div class="track__name"><button class="arm">A</button><span>${t.name}</span><span class="knob _right"></span></div>
            <span class="ms"><button class="ms__m">M</button><button class="ms__s">S</button></span>
            <button class="route ${t.busy ? 'route--busy' : ''}">ROUTE</button>
            <span class="fx ${t.off ? '_off' : ''}"><button>FX</button><button class="fx__on">${icon('power')}</button></span>
            <span class="knob ${t.pan || ''}"></span>
            ${t.child ? '' : `<button class="trim">${icon('env')}TRIM</button>`}
        </div>
        <div class="track__meter ${t.meter || ''}">${bars}</div>
    </div>`;
}

function laneHtml(t) {
    if (t.env) {
        return `<div class="lane lane--env ${t.volume ? 'lane--volume' : ''}"><div></div></div>`;
    }
    let pos = FROM;
    const clips = (t.clips || []).map(([from, to, color, label, pattern, icons]) => {
        const gap = (from - pos) / SPAN * 100;
        const width = (to - from) / SPAN * 100;
        pos = to;
        const cut = icons && icons.startsWith('cut') ? 'clip__label--cut' : '';
        const art = pattern === 'wave' ? (icons === 'lock' ? swell : wave) : '';
        return `<div class="clip" style="width:${width}%;margin-left:${gap}%">
            <div class="clip__label ${cut}">${iconSets[icons] || ''}<span>${label}</span></div>
            <div class="clip__body clip__body--${pattern || 'plain'}" style="--color:${color}">${art}</div>
        </div>`;
    }).join('');
    return `<div class="lane">${clips}</div>`;
}

function stripHtml(s) {
    const travel = s.child ? 26 : 31;
    const value = travel + 10 - s.c;
    const bars = (s.m || []).map((h, i) => {
        const cls = s.hot ? '_hot' : (s.mix && i ? '_mix' : '');
        return `<i class="${cls}" style="height:${h}px"></i>`;
    }).join('');
    return `<div class="strip ${s.child ? 'strip--child' : ''}">
        <div class="strip__io">
            <div class="pick"><select aria-label="MIDI input ${s.n}"><option>MIDI: LKMK</option></select>${icon('drop')}</div>
            <div class="strip__in">
                <div class="pick"><select aria-label="monitor ${s.n}"><option>in</option></select>${icon('drop')}</div>
                <button class="strip__disk">${icon('disk')}</button>
            </div>
            <span class="knob ${s.pan || ''}"></span>
        </div>
        <div class="strip__main">
            <div class="strip__value ${s.clip ? 'strip__value--clip' : ''}">${s.v}</div>
            <div class="strip__row">
                <div class="strip__left">
                    <div class="strip__levels">
                        <div class="strip__meter ${s.dim ? 'strip__meter--dim' : ''}">${bars}</div>
                        <input class="fader" type="range" min="0" max="${travel}" value="${value}" aria-label="volume ${s.n}">
                    </div>
                    <div class="strip__arm">${icon('speaker')}<button class="arm">A</button></div>
                </div>
                <div class="strip__buttons">
                    <button class="sq sq--m">M</button>
                    <button class="sq sq--s">S</button>
                    <button class="sq sq--route ${s.r || ''}">${icon('route')}</button>
                    <span class="vfx ${s.off ? '_off' : ''}"><button>FX</button><button class="vfx__on">${icon('power')}</button></span>
                    ${s.child ? '' : `<button class="sq sq--env">${icon('env')}</button>`}
                </div>
            </div>
            <div class="strip__name">${s.name}</div>
        </div>
        <div class="strip__num">${s.n}</div>
    </div>`;
}

document.querySelector('#tracks').innerHTML = tracks.map(trackHtml).join('');
document.querySelector('#lanes').innerHTML = tracks.map(laneHtml).join('');
document.querySelector('#strips').innerHTML = strips.map(stripHtml).join('');
document.querySelector('#ruler').innerHTML = marks.map(([bar, time]) =>
    `<div class="ruler__mark ${bar.endsWith('.1') ? 'ruler__mark--bar' : ''}"><b>${bar}</b>${time}</div>`).join('');
```
